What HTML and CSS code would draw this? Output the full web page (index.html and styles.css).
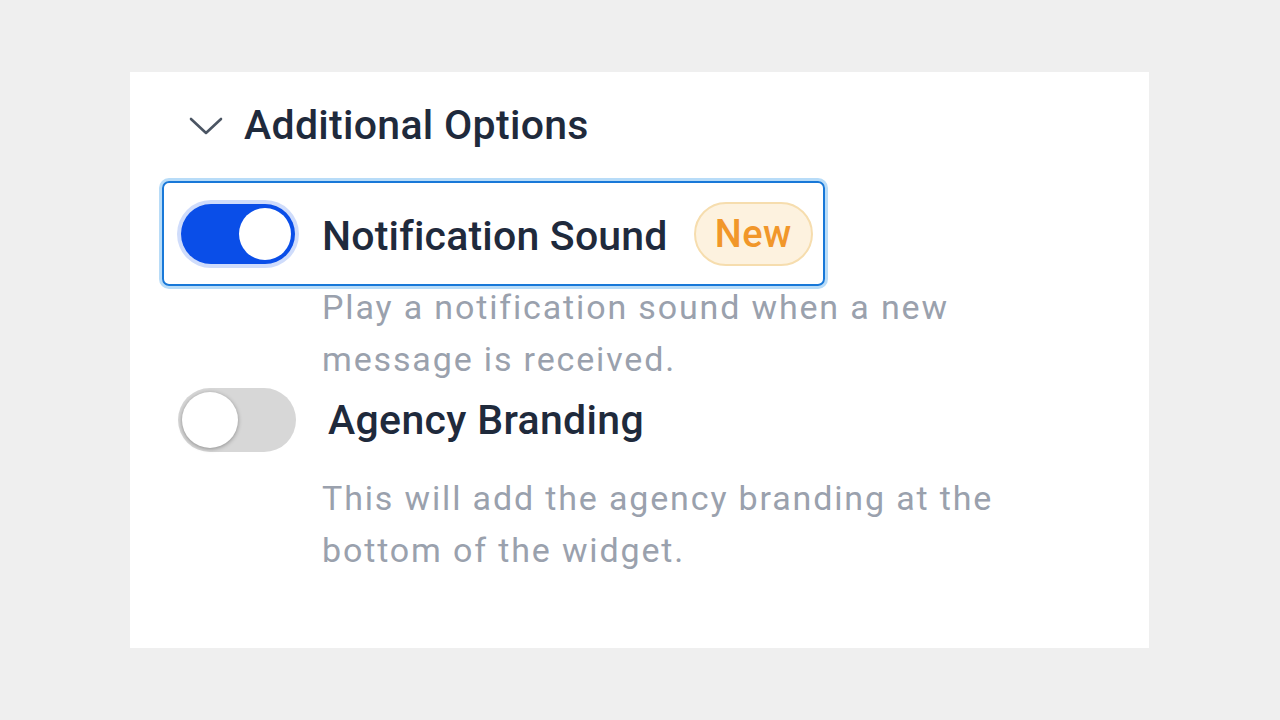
FILE: index.html
```html
<!DOCTYPE html>
<html>
<head>
<meta charset="utf-8">
<link rel="stylesheet" href="styles.css">
</head>
<body>
<div class="card">
  <div class="section-head">
    <svg class="chevron" width="34" height="20" viewBox="0 0 34 20"><polyline points="2,3 17,17 32,3" fill="none" stroke="#4b5563" stroke-width="2.6" stroke-linecap="round" stroke-linejoin="round"/></svg>
    <span class="section-title">Additional Options</span>
  </div>
  <div class="options">
    <div class="option">
      <div class="option-head focused">
        <span class="toggle on"><span class="knob"></span></span>
        <span class="label">Notification Sound</span>
        <span class="badge">New</span>
      </div>
      <p class="desc desc-1">Play a notification sound when a new<br>message is received.</p>
    </div>
    <div class="option">
      <div class="option-head plain">
        <span class="toggle off"><span class="knob"></span></span>
        <span class="label label-2">Agency Branding</span>
      </div>
      <p class="desc desc-2">This will add the agency branding at the<br>bottom of the widget.</p>
    </div>
  </div>
</div>
</body>
</html>
```
FILE: styles.css
```css
html, body {
  margin: 0;
  padding: 0;
  background: #efefef;
  font-family: Roboto, "Liberation Sans", sans-serif;
}
body {
  width: 1280px;
  height: 720px;
  overflow: hidden;
}
.card {
  box-sizing: border-box;
  margin: 72px 0 0 130px;
  width: 1019px;
  height: 576px;
  background: #ffffff;
  padding: 30px 0 0 32px;
}
.section-head {
  display: flex;
  align-items: center;
  height: 46px;
  margin-left: 27px;
  margin-bottom: 33px;
}
.chevron {
  display: block;
  margin-right: 21px;
  margin-top: 2px;
}
.section-title {
  font-size: 41px;
  font-weight: 500;
  color: #1f2a3c;
  letter-spacing: 0.3px;
}
.options {
  display: flex;
  flex-direction: column;
}
.option {
  display: flex;
  flex-direction: column;
}
.option-head {
  display: inline-flex;
  align-items: center;
  box-sizing: border-box;
  align-self: flex-start;
}
.option-head.focused {
  height: 105px;
  border: 2px solid #1878d8;
  border-radius: 7px;
  box-shadow: 0 0 0 3px #b8dcf8;
  padding: 0 10px 0 14px;
}
.option-head.plain {
  height: 66px;
  padding-left: 16px;
  margin-top: 2px;
}
.toggle {
  position: relative;
  display: block;
  box-sizing: border-box;
  border-radius: 32px;
  flex: none;
}
.toggle.on {
  background: #0a4ee8;
  box-shadow: 0 0 0 4px #cfdcfb;
  width: 114px;
  height: 60px;
  margin: 0 3px;
}
.toggle.on .knob {
  position: absolute;
  right: 4px;
  top: 4px;
  width: 52px;
  height: 52px;
  border-radius: 50%;
  background: #ffffff;
}
.toggle.off {
  background: #d7d7d7;
  width: 118px;
  height: 64px;
}
.toggle.off .knob {
  position: absolute;
  left: 4px;
  top: 4px;
  width: 56px;
  height: 56px;
  border-radius: 50%;
  background: #ffffff;
  box-shadow: 0 1px 4px rgba(0, 0, 0, 0.35);
}
.label {
  font-size: 41px;
  font-weight: 500;
  color: #1f2a3c;
  margin-left: 24px;
  margin-top: 5px;
  letter-spacing: 0.2px;
}
.label-2 {
  margin-left: 32px;
  margin-top: 0;
  letter-spacing: 0.33px;
}
.badge {
  display: inline-flex;
  align-items: center;
  justify-content: center;
  box-sizing: border-box;
  width: 119px;
  height: 64px;
  margin-left: 26px;
  border-radius: 32px;
  background: #fdf2df;
  border: 2px solid #f6ddae;
  color: #f1972a;
  font-size: 38px;
  font-weight: 500;
  letter-spacing: 0.5px;
}
.desc {
  margin: 0;
  font-size: 34px;
  line-height: 52px;
  letter-spacing: 1.85px;
  color: #9aa1ad;
  padding-left: 160px;
}
.desc-1 {
  margin-top: -5px;
}
.desc-2 {
  margin-top: 19px;
}
```
